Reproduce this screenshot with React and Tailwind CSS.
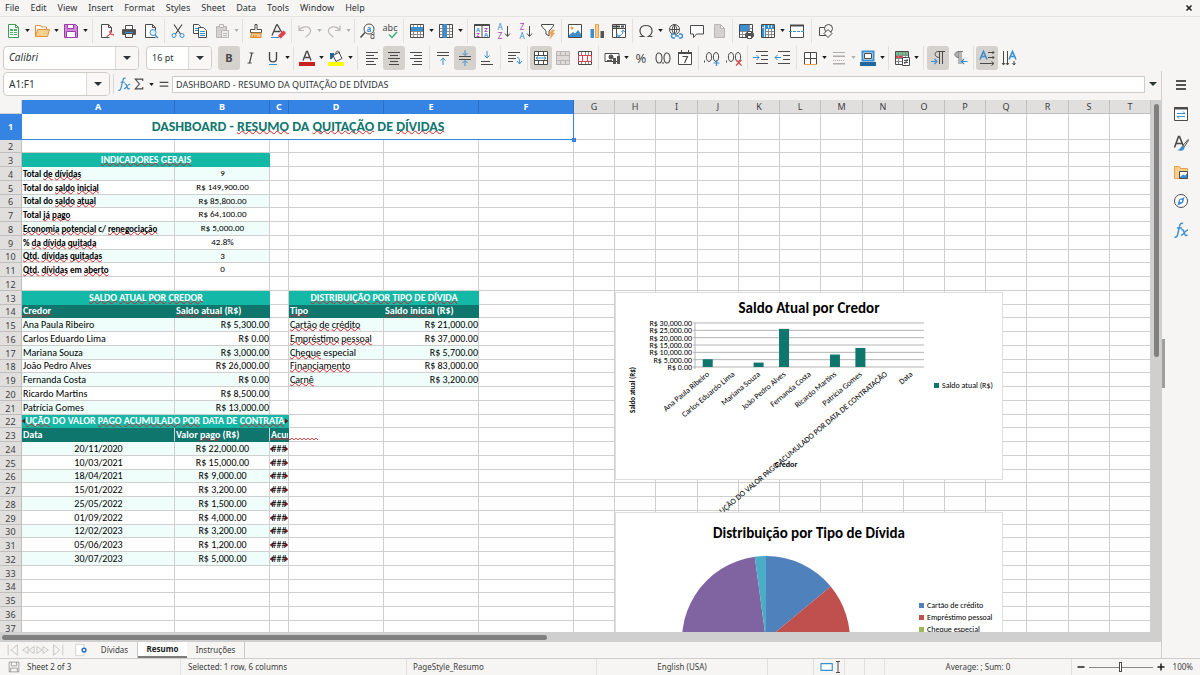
import { Fragment } from 'react'

const DARK = '#4a4a4a'
const BLUE = '#3a8fd0'
const ORANGE = '#e8a04c'
const PURPLE = '#a845b5'

const COLUMNS = [
  ['A', 'w-[153px]'], ['B', 'w-[95px]'], ['C', 'w-[19px]'], ['D', 'w-[95px]'], ['E', 'w-[95px]'],
  ['F', 'w-[95px]'], ['G', 'w-[41px]'], ['H', 'w-[41px]'], ['I', 'w-[42px]'], ['J', 'w-[41px]'],
  ['K', 'w-[41px]'], ['L', 'w-[41px]'], ['M', 'w-[42px]'], ['N', 'w-[41px]'], ['O', 'w-[41px]'],
  ['P', 'w-[41px]'], ['Q', 'w-[41px]'], ['R', 'w-[42px]'], ['S', 'w-[41px]'], ['T', ''],
]

const KINDS = {
  title: 'text-center align-middle text-[14px] font-bold text-[#0f766e] border-[#3584e4]',
  section: 'text-center text-[10px] font-bold text-white bg-[#14b8a6] border-[#14b8a6]',
  head: 'text-[10px] font-bold text-white bg-[#0f766e] border-[#0f766e] align-bottom',
  headLined: 'text-[10px] font-bold text-white bg-[#0f766e] border-b-[#0f766e] border-r-[#cfcfcf] align-bottom',
  label: 'text-[9px] font-bold align-bottom border-[#cfcfcf]',
  value: 'text-[9px] text-center align-top border-[#cfcfcf]',
  text: 'text-[10px] align-bottom border-[#cfcfcf]',
  money: 'text-[10px] text-right align-bottom border-[#cfcfcf]',
  center: 'text-[10px] text-center border-[#cfcfcf]',
}

// words between ~ are marked by the spell checker
const CELLS = {
  A1: ['title', 'DASHBOARD - ~RESUMO~ DA ~QUITAÇÃO~ DE ~DÍVIDAS~', 6],
  A3: ['section', '~INDICADORES~ ~GERAIS~', 2],
  A13: ['section', '~SALDO~ ~ATUAL~ ~POR~ ~CREDOR~', 2],
  D13: ['section', '~DISTRIBUIÇÃO~ ~POR~ ~TIPO~ DE ~DÍVIDA~', 2],
  A14: ['head', '~Credor~'],
  B14: ['head', '~Saldo~ ~atual~ (R$)'],
  D14: ['head', '~Tipo~'],
  E14: ['head', '~Saldo~ ~inicial~ (R$)'],
  A23: ['headLined', 'Data'],
  B23: ['headLined', 'Valor ~pago~ (R$)'],
}

const INDICATORS = [
  ['Total ~de~ ~dívidas~', '9'],
  ['Total do ~saldo~ ~inicial~', 'R$ 149,900.00'],
  ['Total do ~saldo~ ~atual~', 'R$ 85,800.00'],
  ['Total ~já~ ~pago~', 'R$ 64,100.00'],
  ['~Economia~ ~potencial~ c/ ~renegociação~', 'R$ 5,000.00'],
  ['% ~da~ ~dívida~ ~quitada~', '42.8%'],
  ['~Qtd.~ ~dívidas~ ~quitadas~', '3'],
  ['~Qtd.~ ~dívidas~ em ~aberto~', '0'],
]
const CREDITORS = [
  ['Ana Paula Ribeiro', 5300], ['Carlos Eduardo Lima', 0], ['Mariana Souza', 3000],
  ['João Pedro Alves', 26000], ['Fernanda Costa', 0], ['Ricardo Martins', 8500], ['Patrícia Gomes', 13000],
]
const TYPES = [
  ['~Cartão~ ~de~ ~crédito~', 21000], ['~Empréstimo~ ~pessoal~', 37000], ['~Cheque~ especial', 5700],
  ['~Financiamento~', 83000], ['~Carnê~', 3200],
]
const PAYMENTS = [
  ['20/11/2020', 22000], ['10/03/2021', 15000], ['18/04/2021', 9000], ['15/01/2022', 3200],
  ['25/05/2022', 1500], ['01/09/2022', 4000], ['12/02/2023', 3200], ['05/06/2023', 1200], ['30/07/2023', 5000],
]

const money = (n) => 'R$ ' + n.toLocaleString('en-US', { minimumFractionDigits: 2 })

INDICATORS.forEach(([label, value], i) => {
  CELLS['A' + (4 + i)] = ['label', label, 1, i % 2 === 0]
  CELLS['B' + (4 + i)] = ['value', value, 1, i % 2 === 0]
})
CREDITORS.forEach(([name, value], i) => {
  CELLS['A' + (15 + i)] = ['text', name, 1, i % 2 === 0]
  CELLS['B' + (15 + i)] = ['money', money(value), 1, i % 2 === 0]
})
TYPES.forEach(([name, value], i) => {
  CELLS['D' + (15 + i)] = ['text', name, 1, i % 2 === 0]
  CELLS['E' + (15 + i)] = ['money', money(value), 1, i % 2 === 0]
})
PAYMENTS.forEach(([date, value], i) => {
  CELLS['A' + (24 + i)] = ['center', date, 1, i % 2 === 0]
  CELLS['B' + (24 + i)] = ['center', money(value), 1, i % 2 === 0]
})

function Spelled({ text }) {
  return text.split('~').map((part, i) =>
    i % 2 ? (
      <span key={i} className="underline decoration-[#e01b24] decoration-wavy decoration-1 -underline-offset-1 [text-decoration-skip-ink:none]">{part}</span>
    ) : (
      <Fragment key={i}>{part}</Fragment>
    )
  )
}

/* ---------- toolbar pieces ---------- */

function Svg({ children, size = 'size-4', box = '0 0 16 16' }) {
  return (
    <svg viewBox={box} className={`${size} shrink-0 overflow-visible`} fill="none" stroke={DARK} strokeWidth="1" aria-hidden="true">
      {children}
    </svg>
  )
}

function Tool({ label, active, disabled, children }) {
  return (
    <button
      type="button"
      aria-label={label}
      disabled={disabled}
      className={`flex h-6 w-[22px] shrink-0 items-center justify-center rounded-[3px] ${active ? 'bg-[#d5d1cd]' : ''}`}
    >
      {children}
    </button>
  )
}

function Caret({ label = 'More options', faded, className = 'w-[7px]' }) {
  return (
    <button type="button" aria-label={label} className={`flex h-6 shrink-0 items-center justify-center ${className}`}>
      <svg viewBox="0 0 6 4" className="h-[3px] w-[5px]" fill={faded ? '#b5b2af' : '#1c1c1c'} aria-hidden="true"><path d="M0 0h6L3 4z" /></svg>
    </button>
  )
}

function Sep({ wide }) {
  return (
    <span className={`flex h-6 shrink-0 justify-center ${wide ? 'w-[7px]' : 'w-[5px]'}`}>
      <span className="w-px bg-[#e2e0de]" />
    </span>
  )
}

const Glyph = ({ x = 8, y, size, fill = DARK, bold, children }) => (
  <text x={x} y={y} fontSize={size} fill={fill} stroke="none" textAnchor="middle" fontWeight={bold ? 700 : 400} fontFamily="Noto Sans, sans-serif">{children}</text>
)

const GridLines = () => (
  <>
    <path stroke="#8c8c8c" d="M1.5 5.500h13M1.500 8.500h13M1.500 11.500h13M4.500 1.500v13M8.500 1.500v13M11.500 1.500v13" />
    <path d="M1.500 1.500h13v13h-13z" />
  </>
)

const RowIcon = () => (
  <Svg><path fill="#fff" stroke="none" d="M1 1h14v14H1z" /><GridLines /><rect x="2" y="4" width="12" height="4" fill={BLUE} stroke="none" /></Svg>
)
const ColIcon = () => (
  <Svg><path fill="#fff" stroke="none" d="M1 1h14v14H1z" /><GridLines /><rect x="5" y="1" width="4" height="14" fill={BLUE} stroke="none" /></Svg>
)
const NewIcon = () => (
  <Svg>
    <path stroke="#3d9c55" fill="#fff" d="M3.500 1.500h7l3 3v10h-10z" />
    <path stroke="#3d9c55" d="M10.500 1.500v3h3" />
    <path fill="#4fae66" stroke="none" d="M5 6h7v6H5z" />
    <path stroke="#fff" d="M5 8.500h7M5 10.500h7M8.500 6v6" />
  </Svg>
)
const OpenIcon = () => (
  <Svg>
    <path stroke="#e0923a" fill="#fff" d="M1.500 13.500v-11h5l1 1.500h5v2.500" />
    <path stroke="#e0923a" fill="#f8cf8d" d="M1.500 13.500l2-7h12l-2 7z" />
  </Svg>
)
const SaveIcon = () => (
  <Svg>
    <path stroke="#9a3da8" fill="#cf88d8" d="M1.500 1.500h11l2 2v11h-13z" />
    <path stroke="#9a3da8" fill="#fff" d="M4.500 1.500h6v4h-6zM3.500 8.500h9v6h-9z" />
  </Svg>
)
const PdfIcon = () => (
  <Svg>
    <path fill="#fff" d="M10.500 14.500h-8v-13h7l3 3v5M9.500 1.500v3h3" />
    <path stroke="#d8434e" d="M7.500 13.500c3-1 5-4 4-6.500M10 8c1 3 3 4 5 4M8 13.500c2-2 5-3 7-1.500" />
  </Svg>
)
const PrintIcon = () => (
  <Svg>
    <path fill="#fff" d="M4.500 6V2.500h7V6" />
    <rect x="1" y="6" width="14" height="6" rx="1" fill="#555" stroke="none" />
    <path fill={BLUE} stroke="none" d="M4 9h8v1H4z" />
    <path fill="#fff" d="M4.500 10.500h7v4h-7z" />
  </Svg>
)
const PreviewIcon = () => (
  <Svg>
    <path fill="#fff" d="M12.500 14.500h-10v-13h7l3 3v3M9.500 1.500v3h3" />
    <circle cx="10" cy="9.500" r="3" stroke={BLUE} fill="#e6f2fb" /><path stroke={BLUE} strokeWidth="1.500" d="M12 12l3 3" />
  </Svg>
)
const CutIcon = () => (
  <Svg>
    <path d="M4 1.500l6.500 9.500M12 1.500L5.500 11" strokeWidth="1.200" />
    <circle cx="4" cy="12.500" r="2" stroke={BLUE} /><circle cx="12" cy="12.500" r="2" stroke={BLUE} />
  </Svg>
)
const CopyIcon = () => (
  <Svg>
    <path fill="#fff" d="M1.500 1.500h5l2 2v7h-7z" />
    <path stroke={BLUE} d="M3 5.500h3M3 7.500h3" />
    <path fill="#fff" d="M6.500 4.500h5l3 3v7h-8z" />
    <path stroke={BLUE} d="M8 8.500h5M8 10.500h5M8 12.500h5" />
  </Svg>
)
const PasteIcon = () => (
  <Svg>
    <path stroke="#b9b6b3" fill="#d4d1ce" d="M2.500 3.500h10v11h-10z" />
    <path stroke="#b9b6b3" fill="#eee" d="M5.500 1.500h4v3h-4zM7.500 7.500h7v7h-7zM9 10.500h4M9 12.500h4" />
  </Svg>
)
const BrushIcon = () => (
  <Svg>
    <path fill="#fff" d="M7 1.500h2v5h4.500v3h-11v-3H7z" />
    <path stroke="#d98a36" fill="#f5c480" d="M3.500 10h9.500v4.500H2.500z" />
    <path stroke="#d98a36" d="M5.500 12v2.500M8 12v2.500" />
  </Svg>
)
const ClearIcon = () => (
  <Svg>
    <path d="M2 12.500L6.500 2h1L12 10M4 8.500h6" strokeWidth="1.300" />
    <path stroke={BLUE} d="M1 14.500h8" />
    <rect x="8" y="9.500" width="8" height="4" rx="1" fill="#e0444e" stroke="none" transform="rotate(-45 12 11.500)" />
  </Svg>
)
const UndoIcon = ({ flip }) => (
  <Svg>
    <g transform={flip ? 'translate(16 0) scale(-1 1)' : undefined} stroke="#bab7b4" strokeWidth="1.200">
      <path d="M2 2.500v5h5M2 7.500C5 3 12 2.500 13.500 7c.8 3-2 5-5 7" />
    </g>
  </Svg>
)
const FindIcon = () => (
  <Svg>
    <circle cx="9" cy="6" r="5" fill="#fff" /><path d="M5 9.500L.5 14.500" strokeWidth="1.500" />
    <Glyph x={9} y={9} size={8} fill={BLUE} bold>a</Glyph><Glyph x={12.500} y={16} size={8}>d</Glyph>
  </Svg>
)
const SpellIcon = () => (
  <Svg><Glyph y={8} size={9}>abc</Glyph><path stroke="#3fae7d" strokeWidth="1.500" d="M7 11.500l3 3 5-5.500" /></Svg>
)
const SortIcon = () => (
  <Svg>
    <path d="M.5 1.500h15v13H.5zM8 1.500v13" fill="#fff" /><path d="M.5 2h15" strokeWidth="2" />
    <Glyph x={4} y={8.500} size={6} fill={BLUE} bold>A</Glyph><Glyph x={4} y={14} size={6} fill={PURPLE} bold>Z</Glyph>
    <Glyph x={12} y={8.500} size={6} fill={PURPLE} bold>Z</Glyph><Glyph x={12} y={14} size={6} fill={BLUE} bold>A</Glyph>
  </Svg>
)
const AzIcon = ({ top, bottom, topColor, bottomColor }) => (
  <Svg>
    <Glyph x={4} y={7} size={8} fill={topColor}>{top}</Glyph><Glyph x={4} y={15.500} size={8} fill={bottomColor}>{bottom}</Glyph>
    <path d="M11.500 3v10M9 10.500l2.500 3 2.500-3" />
  </Svg>
)
const FilterIcon = () => (
  <Svg>
    <path fill="#fff" d="M1.500 1.500h12v1.500L9 8v5l-3-2V8L1.500 3z" />
    <path fill="#f0a848" stroke="#d98a36" strokeWidth=".5" d="M12 7l-3 4h2.500L10 15.500l4.500-5.500H12L14.500 7z" />
  </Svg>
)
const ImageIcon = () => (
  <Svg>
    <path fill="#fff" d="M1.500 1.500h13v13h-13z" /><circle cx="5" cy="5" r="1.500" fill={ORANGE} stroke="none" />
    <path fill={BLUE} stroke="none" d="M2 12l4-3 2 1.500L11 7l3 4v3H2z" />
  </Svg>
)
const ChartIcon = () => (
  <Svg>
    <path fill={BLUE} stroke="none" d="M1.500 6h3.500v9H1.500z" /><path fill="#f8cf8d" stroke={ORANGE} d="M6.500 1.500h3v13h-3z" />
    <path fill="#555" stroke="none" d="M11.500 8h3.500v7h-3.500z" />
  </Svg>
)
const PivotIcon = () => (
  <Svg>
    <path fill="#fff" d="M1.500 1.500h13v13h-13zM5.500 1.500v13M1.500 5.500h13" /><path d="M2 3.500h12" strokeWidth="2" strokeDasharray="3 1" />
    <path stroke={BLUE} d="M6 10v3h3M7 13c3 0 5-2 5-5M10.500 9L12 7l2 2" />
  </Svg>
)
const OmegaIcon = () => (
  <Svg><path d="M1.500 13.500h4c-5-3-5-11 2.500-11s7.500 8 2.500 11h4" strokeWidth="1.200" /></Svg>
)
const LinkIcon = () => (
  <Svg>
    <circle cx="7.500" cy="6.500" r="5" fill="#fff" /><path d="M2.500 6.500h10M7.500 1.500v10M7.500 1.500c-3 3-3 7 0 10M7.500 1.500c3 3 3 7 0 10" />
    <path stroke={BLUE} strokeWidth="1.300" fill="#f6f5f4" d="M8 11h-1.500a2 2 0 000 4H8M12 11h1.500a2 2 0 010 4H12M8 13h4" />
  </Svg>
)
const CommentIcon = () => (
  <Svg><path fill="#fff" d="M1.500 2.500h13v8.500H7.500l-3 3.500V11h-3z" /></Svg>
)
const PageIcon = () => (
  <Svg><path stroke="#b9b6b3" fill="#d4d1ce" d="M3.500 1.500h6l4 4v9h-10zM9.500 1.500v4h4" /></Svg>
)
const PrintAreaIcon = () => (
  <Svg>
    <path fill="#fff" stroke="none" d="M1 1h14v14H1z" /><GridLines /><rect x="2" y="2" width="9" height="6" fill={BLUE} stroke="none" />
    <rect x="7" y="10" width="9" height="4" rx="1" fill="#555" stroke="none" /><path fill="#fff" d="M9.500 8.500h4v2h-4zM9.500 12.500h4v3h-4z" />
  </Svg>
)
const FreezeIcon = () => (
  <Svg><path fill="#fff" stroke="none" d="M1 1h14v14H1z" /><GridLines /><path fill={BLUE} stroke="none" d="M2 2h12v4H6v8H2z" /><path stroke="#cfe6f7" d="M4.500 2v12M8.500 2v3M11.500 2v3M2 4.500h3" /></Svg>
)
const SplitIcon = () => (
  <Svg><path fill="#fff" d="M1.500 2.500h13v12h-13z" /><path strokeWidth="2" d="M1 2.500h14" /><path stroke={BLUE} strokeDasharray="3 1" d="M0 8.500h16" /></Svg>
)
const ShapesIcon = () => (
  <Svg><path d="M1.500 4.500h7v8h-7z" /><circle cx="10.500" cy="5.500" r="4" fill="#f6f5f4" /><path fill="#f6f5f4" d="M10 6.500l4 4-4 4-4-4z" /></Svg>
)

const Lines = ({ d, color, children }) => <Svg><path d={d} stroke={color} />{children}</Svg>

const MergeIcon = ({ color = DARK, fill = '#fff', mid = BLUE }) => (
  <Svg>
    <path fill={fill} stroke={color} d="M1.500 1.500h13v13h-13zM1.500 5.500h13M1.500 10.500h13M5.500 1.500v4M10.500 1.500v4M5.500 10.500v4M10.500 10.500v4" />
    <path stroke={mid} d="M3 8h10M5 6.500L3 8l2 1.500M11 6.500L13 8l-2 1.500" />
  </Svg>
)

const StandardBar = () => (
  <div role="toolbar" aria-label="Standard" className="flex h-[27px] items-center pl-0.5">
    <Tool label="New"><NewIcon /></Tool><Caret />
    <Tool label="Open"><OpenIcon /></Tool><Caret />
    <Tool label="Save"><SaveIcon /></Tool><Caret />
    <Sep wide />
    <Tool label="Export as PDF"><PdfIcon /></Tool>
    <Tool label="Print"><PrintIcon /></Tool>
    <Tool label="Print preview"><PreviewIcon /></Tool>
    <Sep />
    <Tool label="Cut"><CutIcon /></Tool>
    <Tool label="Copy"><CopyIcon /></Tool>
    <Tool label="Paste" disabled><PasteIcon /></Tool><Caret faded />
    <Sep />
    <Tool label="Clone formatting"><BrushIcon /></Tool>
    <Tool label="Clear formatting"><ClearIcon /></Tool>
    <Sep />
    <Tool label="Undo" disabled><UndoIcon /></Tool><Caret faded />
    <Tool label="Redo" disabled><UndoIcon flip /></Tool><Caret faded />
    <Sep />
    <Tool label="Find and replace"><FindIcon /></Tool>
    <Tool label="Spelling"><SpellIcon /></Tool>
    <Sep />
    <Tool label="Row"><RowIcon /></Tool><Caret />
    <Tool label="Column"><ColIcon /></Tool><Caret />
    <Sep wide />
    <Tool label="Sort"><SortIcon /></Tool>
    <Tool label="Sort ascending"><AzIcon top="A" bottom="Z" topColor={BLUE} bottomColor={PURPLE} /></Tool>
    <Tool label="Sort descending"><AzIcon top="Z" bottom="A" topColor={PURPLE} bottomColor={BLUE} /></Tool>
    <Tool label="AutoFilter"><FilterIcon /></Tool>
    <Sep />
    <Tool label="Image"><ImageIcon /></Tool>
    <Tool label="Chart"><ChartIcon /></Tool>
    <Tool label="Pivot table"><PivotIcon /></Tool>
    <Sep />
    <Tool label="Special character"><OmegaIcon /></Tool><Caret />
    <Tool label="Hyperlink"><LinkIcon /></Tool>
    <Tool label="Comment"><CommentIcon /></Tool>
    <Tool label="Headers and footers" disabled><PageIcon /></Tool>
    <Sep />
    <Tool label="Print area"><PrintAreaIcon /></Tool>
    <Tool label="Freeze"><FreezeIcon /></Tool><Caret />
    <Tool label="Split window"><SplitIcon /></Tool>
    <Sep wide />
    <Tool label="Draw functions"><ShapesIcon /></Tool>
  </div>
)

function ComboBox({ label, value, className, inputClass = '' }) {
  return (
    <div className={`flex h-6 shrink-0 overflow-hidden rounded border border-[#cfcbc7] bg-white ${className}`}>
      <input aria-label={label} defaultValue={value} className={`min-w-0 flex-1 pl-[5px] text-[#2e3436] outline-none ${inputClass}`} />
      <button type="button" aria-label={`${label} list`} className="flex w-[23px] items-center justify-center border-l border-[#dad7d4] bg-[#f8f7f6]">
        <svg viewBox="0 0 8 4" className="h-1 w-2" fill="#2e3436" aria-hidden="true"><path d="M0 0h8L4 4z" /></svg>
      </button>
    </div>
  )
}

const FormattingBar = () => (
  <div role="toolbar" aria-label="Formatting" className="flex h-[27px] items-center pl-[3px]">
    <ComboBox label="Font name" value="Calibri" className="mr-[7px] w-[136px]" inputClass="text-[10px] italic" />
    <ComboBox label="Font size" value="16 pt" className="mr-1.5 w-[66px]" inputClass="text-[9px]" />
    <Tool label="Bold" active><Svg><Glyph y={12} size={11} bold>B</Glyph></Svg></Tool>
    <Tool label="Italic"><Svg><path d="M6.500 3h4M4.500 13h4M9 3L6.500 13" strokeWidth="1.200" /></Svg></Tool>
    <Tool label="Underline"><Svg><path d="M4.500 2v6.500c0 4.500 7 4.500 7 0V2" strokeWidth="1.400" /><path stroke={BLUE} d="M4 14.500h8" /></Svg></Tool><Caret />
    <Sep />
    <Tool label="Font color"><Svg><path d="M4 10.500L7.500 1.500h1L12 10.500M5.500 7.500h5" strokeWidth="1.400" /><path fill="#c9211e" stroke="none" d="M0 12h16v4H0z" /></Svg></Tool><Caret />
    <Tool label="Highlighting color"><Svg><path fill="#fff" d="M5 5.500l6-3 3 6-6 3z" /><path d="M8 4c-1-3 3-4 4-1" /><path fill="#22669e" stroke="none" d="M2 3h4v2L4 9H2z" /><path fill="#ffff00" stroke="none" d="M0 12h16v4H0z" /></Svg></Tool><Caret />
    <Sep wide />
    <Tool label="Align left"><Lines d="M2 2.500h12M2 5.500h8M2 8.500h12M2 11.500h8M2 14.500h10" /></Tool>
    <Tool label="Center horizontally" active><Lines d="M2 2.500h12M4 5.500h8M2 8.500h12M4 11.500h8M3 14.500h10" /></Tool>
    <Tool label="Align right"><Lines d="M2 2.500h12M6 5.500h8M2 8.500h12M6 11.500h8M4 14.500h10" /></Tool>
    <Sep />
    <Tool label="Align top"><Lines d="M2 2.500h12M2 5.500h12"><path stroke={BLUE} d="M8 15V8M5.500 10.500L8 8l2.500 2.500" /></Lines></Tool>
    <Tool label="Center vertically" active><Lines d="M2 6.500h12M2 9.500h12"><path stroke={BLUE} d="M8 0v5M5.500 3L8 5.500 10.500 3M8 16v-5M5.500 13L8 10.500l2.500 2.500" /></Lines></Tool>
    <Tool label="Align bottom"><Lines d="M2 11.500h9M2 14.500h12"><path stroke={BLUE} d="M8 1v7M5.500 5.500L8 8l2.500-2.500" /></Lines></Tool>
    <Sep />
    <Tool label="Wrap text"><Lines d="M2 2.500h12M2 5.500h8M2 8.500h8M2 11.500h5"><path stroke={BLUE} d="M11 7.500c2 0 3 2 2.500 6M11 11l2.500 3L16 11" /></Lines></Tool>
    <Sep />
    <Tool label="Merge and center cells" active><MergeIcon /></Tool>
    <Tool label="Merge cells" disabled><MergeIcon color="#b9b6b3" fill="#dddad8" mid="#dddad8" /></Tool>
    <Tool label="Unmerge cells"><Svg><path fill="#fff" stroke="none" d="M1 1h14v14H1z" /><GridLines /><path fill="#fff" stroke="#d8434e" d="M1.500 5.500h13v6h-13zM5.500 5.500v6M10.500 5.500v6" /></Svg></Tool>
    <Sep />
    <Tool label="Currency"><Svg><path d="M1 3.500h14v8H1z" fill="#fff" /><circle cx="7" cy="7" r="2" fill="#555" /><path fill="#555" stroke="none" d="M9 8h3v6H9zM13 6h3v8h-3zM3 10h5v2H3z" /></Svg></Tool><Caret />
    <Tool label="Percent"><Svg><Glyph y={13} size={13}>%</Glyph></Svg></Tool>
    <Tool label="Number"><Svg><path strokeWidth="1.100" d="M4 3c-4 0-4 10 0 10s4-10 0-10zM12 3c-4 0-4 10 0 10s4-10 0-10zM8 12v2" /></Svg></Tool>
    <Tool label="Date"><Svg><path fill="#fff" d="M1.500 2.500h13v12h-13z" /><path d="M1 3h14" strokeWidth="2" /><path d="M4.500 0v2M11.500 0v2" /><path d="M5.500 6.500h5L7.500 13" strokeWidth="1.200" /></Svg></Tool>
    <Sep />
    <Tool label="Add decimal place"><Svg><path d="M5 2.500c-3.500 0-3.500 9 0 9s3.500-9 0-9zM12 2.500c-3.500 0-3.500 9 0 9s3.500-9 0-9zM.5 10.500v2" /><path stroke={BLUE} strokeWidth="1.200" d="M12.500 10v6M9.500 13h6" /></Svg></Tool>
    <Tool label="Delete decimal place"><Svg><path d="M5 2.500c-3.500 0-3.500 9 0 9s3.500-9 0-9zM12 2.500c-3.500 0-3.500 9 0 9s3.500-9 0-9zM.5 10.500v2" /><path stroke="#e0444e" strokeWidth="1.200" d="M10 10l5.500 5.500M15.500 10L10 15.500" /></Svg></Tool>
    <Sep />
    <Tool label="Increase indent"><Lines d="M3 1.500h12M8 5.500h7M8 9.500h7M3 13.500h12"><path stroke={BLUE} d="M0 7.500h6M3.500 5L6 7.500 3.500 10" /></Lines></Tool>
    <Tool label="Decrease indent"><Lines d="M3 1.500h12M8 5.500h7M8 9.500h7M3 13.500h12"><path stroke={BLUE} d="M0 7.500h6M2.500 5L0 7.500 2.500 10" /></Lines></Tool>
    <Sep />
    <Tool label="Borders"><Svg><path fill="#fff" d="M2.500 14V2.500h12V14M8.500 2.500v12M2.500 8.500h12" /><path stroke={ORANGE} d="M2 14.500h13" /></Svg></Tool><Caret />
    <Tool label="Border style" disabled><Lines color="#b0adaa" d="M2 2.500h12M2 6.500h12M2 6h12M2 14h12M2 13.500h12"><path stroke="#b0adaa" strokeDasharray="1 1" d="M2 10.500h12" /></Lines></Tool><Caret faded />
    <Tool label="Border color"><Svg><path fill="#fff" stroke={BLUE} strokeWidth="2" d="M2.500 1.500h11v9h-11z" /><path d="M4.500 3.500h7v5h-7z" /><path fill="#22669e" stroke="none" d="M0 12h16v4H0z" /></Svg></Tool><Caret />
    <Sep />
    <Tool label="Conditional"><Svg><path fill="#fff" stroke="none" d="M1 1h14v14H1z" /><rect x="2" y="1" width="12" height="4" fill="#6cc08a" stroke="none" /><rect x="2" y="5" width="6" height="4" fill="#e0444e" stroke="none" /><GridLines /><path fill="#fff" d="M8.500 7.500h7v8h-7z" /><path d="M10 10.500h4M10 12.500h4M13.500 9l-3 5" /></Svg></Tool><Caret />
    <Sep wide />
    <Tool label="Left to right" active><Svg><path d="M9.500 14V2M12.500 14V2M15 1.500H8c-4 0-4 6 1.500 6" /><path stroke={BLUE} strokeWidth="1.200" d="M1 11.500h6M4.500 9L7 11.500 4.500 14" /></Svg></Tool>
    <Tool label="Right to left"><Svg><path fill="#b5b2af" stroke="#777" d="M7 7.500V14M7 2v5.500c-5.500 0-5.500-6 0-6zM9 1.500V14M6 1.500h5" /><path stroke={BLUE} strokeWidth="1.200" d="M9.500 11.500h6M12 9l-2.500 2.500L12 14" /></Svg></Tool>
    <Sep />
    <Tool label="Text direction from left to right" active><Svg><path stroke={BLUE} strokeWidth="1.600" d="M1 9.500L4.500 1.500 8 9.500M2.500 6.500h4" /><path d="M9 2.500h6M9 7.500h6M1 13.500h14M13.500 1l1.500 1.500L13.500 4M13.500 6L15 7.500 13.500 9M12.500 11.500l2.500 2-2.500 2" /></Svg></Tool>
    <Tool label="Text direction from top to bottom"><Svg><path stroke={BLUE} strokeWidth="1.600" d="M8 9.500l3.500-8 3.500 8M9.500 6.500h4" /><path d="M2.500 1v14M6.500 1v14M13 11v4M1 13l1.500 2L4 13M5 13l1.500 2L8 13M11.500 13l1.500 2 1.500-2" /></Svg></Tool>
  </div>
)

const FxIcon = ({ size = 'size-4' }) => (
  <Svg size={size}>
    <path stroke={BLUE} strokeWidth="1.400" d="M10 1.500c-2-1-3 .5-3.500 3L4.500 13c-.5 2-1.500 2.500-3 2M4 6h5M8.500 8c2-1 2 1 3 3.500s1 2.500 3 1.500M15 8c-3 0-4 5-7 5.500" />
  </Svg>
)

const FormulaBar = () => (
  <div className="flex h-[29px] items-center pb-[3px] pl-[3px]">
    <ComboBox label="Name box" value="A1:F1" className="w-[107px]" inputClass="text-[10px]" />
    <span className="ml-[3px] h-5 w-px bg-[#dad7d4]" />
    <button type="button" aria-label="Function wizard" className="ml-[3px] flex w-3.5 justify-center"><FxIcon size="size-3.5" /></button>
    <button type="button" aria-label="Select function" className="ml-0.5 flex w-3 justify-center">
      <Svg size="size-3"><path strokeWidth="1.500" d="M13 4V1.500H3L8.500 8 3 14.500h10V12" /></Svg>
    </button>
    <Caret className="ml-px w-2.5" />
    <button type="button" aria-label="Formula" className="ml-0.5 flex w-3 justify-center">
      <Svg size="size-2.5"><path strokeWidth="2" d="M1 5.500h14M1 11.500h14" /></Svg>
    </button>
    <input
      aria-label="Input line"
      defaultValue="DASHBOARD - RESUMO DA QUITAÇÃO DE DÍVIDAS"
      className="ml-0.5 h-[17px] min-w-0 flex-1 border border-[#cfcbc7] bg-white pl-[3px] text-[9px] text-[#2e3436] outline-none"
    />
    <button type="button" aria-label="Expand formula bar" className="flex w-4 justify-center">
      <svg viewBox="0 0 8 4" className="h-1 w-2" fill="#2e3436" aria-hidden="true"><path d="M0 0h8L4 4z" /></svg>
    </button>
  </div>
)

/* ---------- sheet ---------- */

const Cut = ({ side }) => (
  <svg viewBox="0 0 4 6" className={`absolute top-[3px] h-1.5 w-[3px] ${side === 'left' ? 'left-0' : 'right-0'}`} aria-hidden="true">
    <path fill="#8c1018" stroke="#200" strokeWidth=".5" d={side === 'left' ? 'M4 0v6L0 3z' : 'M0 0v6l4-3z'} />
  </svg>
)

function Cell({ id, col, row }) {
  const base = 'h-full border-r border-b p-0 leading-[12px] whitespace-nowrap'
  if (id === 'A22') {
    return (
      <td colSpan={3} className={`${base} border-[#14b8a6] bg-[#14b8a6] text-[10px] font-bold text-white`}>
        <div className="relative flex justify-center overflow-hidden">
          <span>
            <Spelled text="~UÇÃO~ DO VALOR ~PAGO~ ~ACUMULADO~ ~POR~ DATA DE ~CONTRATA~" />
          </span>
          <Cut side="left" /><Cut side="right" />
        </div>
      </td>
    )
  }
  if (id === 'C23') {
    return (
      <td className={`${base} relative border-[#0f766e] bg-[#0f766e] align-bottom text-[10px] font-bold text-white`}>
        <div className="overflow-hidden pl-px">Acum</div>
        <svg viewBox="0 0 48 4" className="absolute bottom-0 left-0 h-1 w-12" fill="none" stroke="#e01b24" aria-hidden="true">
          <path strokeWidth=".8" d={'M0 3' + 'l2 -2l2 2'.repeat(12)} />
        </svg>
      </td>
    )
  }
  if (col === 'C' && row >= 24 && row <= 32) {
    return (
      <td className={`${base} border-[#cfcfcf] align-middle text-[10px] ${row % 2 ? '' : 'bg-[#effefb]'}`}>
        <div className="relative text-center"><Cut side="left" />###<Cut side="right" /></div>
      </td>
    )
  }
  const cell = CELLS[id]
  if (!cell) return <td className={`${base} border-[#cfcfcf]`} />
  const [kind, text, span, tinted] = cell
  return (
    <td colSpan={span} className={`${base} pl-px ${tinted ? 'bg-[#effefb]' : ''} ${KINDS[kind]} ${row === 1 ? 'relative' : ''}`}>
      <Spelled text={text} />
      {id === 'A1' && <span className="absolute -right-[3px] -bottom-[3px] size-1 bg-[#3584e4]" />}
    </td>
  )
}

function rowCells(row) {
  const out = []
  for (let i = 0; i < COLUMNS.length; i++) {
    const col = COLUMNS[i][0]
    const id = col + row
    out.push(<Cell key={id} id={id} col={col} row={row} />)
    if (id === 'A22') i += 2
    else i += (CELLS[id]?.[2] ?? 1) - 1
  }
  return out
}

const SheetGrid = () => (
  <table className="w-full table-fixed border-separate border-spacing-0 bg-white font-[Carlito,Lato,sans-serif] text-black">
    <colgroup>
      <col className="w-[22px]" />
      {COLUMNS.map(([name, width]) => <col key={name} className={width} />)}
    </colgroup>
    <thead>
      <tr className="h-3.5 font-['Noto_Sans',sans-serif] text-[9px] leading-[12px]">
        <td className="border-r border-b border-[#cfcfcf] bg-[#f6f5f4] p-0" />
        {COLUMNS.map(([name], i) => (
          <th
            key={name}
            scope="col"
            className={`border-r border-b p-0 ${i < 6 ? 'border-r-[#2a6fc4] border-b-[#3584e4] bg-[#3584e4] font-bold text-white' : 'border-[#c0bfbd] bg-[#e1dfdd] font-normal text-[#3d3d3d]'}`}
          >
            {name}
          </th>
        ))}
      </tr>
    </thead>
    <tbody>
      {Array.from({ length: 37 }, (_, i) => i + 1).map((row) => (
        <tr key={row} className={row === 1 ? 'h-[26px]' : row % 4 === 2 ? 'h-[13px]' : 'h-3.5'}>
          <th
            scope="row"
            className={`border-r border-b p-0 font-['Noto_Sans',sans-serif] text-[9px] ${row === 1 ? 'border-[#3584e4] bg-[#3584e4] font-bold text-white' : 'border-[#c0bfbd] bg-[#e1dfdd] pt-px align-bottom leading-[11px] font-normal text-[#3d3d3d]'}`}
          >
            {row}
          </th>
          {rowCells(row)}
        </tr>
      ))}
    </tbody>
  </table>
)

/* ---------- charts ---------- */

const CATEGORIES = [...CREDITORS, ['UÇÃO DO VALOR PAGO ACUMULADO POR DATA DE CONTRATAÇÃO', 0], ['Data', 0]]

function BarChart() {
  const left = 80, right = 309, top = 31, bottom = 75
  const step = (right - left) / CATEGORIES.length
  return (
    <svg viewBox="1 1 386 186" role="img" aria-label="Saldo Atual por Credor" className="h-[186px] w-[386px] overflow-visible">
      <text x="194" y="21" textAnchor="middle" className="text-[15px] font-bold">Saldo Atual por Credor</text>
      {[30, 25, 20, 15, 10, 5, 0].map((v, i) => {
        const y = top + ((bottom - top) * i) / 6
        return (
          <g key={v}>
            <path d={`M${left - 2} ${y}H${right}`} stroke="#b3b3b3" />
            <text x="77" y={y + 3} textAnchor="end" className="text-[8px]">{money(v * 1000)}</text>
          </g>
        )
      })}
      <path d={`M${left} ${top}V${bottom + 2}`} stroke="#b3b3b3" />
      {CATEGORIES.map(([name, value], i) => {
        const x = left + step * (i + 0.5)
        const h = ((bottom - top) * value) / 30000
        return (
          <g key={name}>
            {value > 0 && <rect x={x - 5} y={bottom - h} width="10" height={h} fill="#0f766e" />}
            <text x={x + 2} y={bottom + 8} textAnchor="end" transform={`rotate(-40 ${x + 2} ${bottom + 8})`} className="text-[8px]">{name}</text>
          </g>
        )
      })}
      <text x="20" y="98" textAnchor="middle" transform="rotate(-90 20 98)" className="text-[7px] font-bold">Saldo atual (R$)</text>
      <text x="171" y="175" textAnchor="middle" className="text-[8px] font-bold">Credor</text>
      <rect x="319" y="91" width="5" height="5" fill="#0f766e" />
      <text x="327" y="96" className="text-[8px]">Saldo atual (R$)</text>
    </svg>
  )
}

const SLICES = [
  ['Cartão de crédito', 21000, '#4f81bd'], ['Empréstimo pessoal', 37000, '#c0504d'], ['Cheque especial', 5700, '#9bbb59'],
  ['Financiamento', 83000, '#8064a2'], ['Carnê', 3200, '#4bacc6'],
]

function PieChart() {
  const total = SLICES.reduce((sum, s) => sum + s[1], 0)
  const cx = 151, cy = 128, r = 84
  const point = (share) => `${cx + r * Math.sin(share * 2 * Math.PI)} ${cy - r * Math.cos(share * 2 * Math.PI)}`
  let start = 0
  return (
    <svg viewBox="1 1 386 225" role="img" aria-label="Distribuição por Tipo de Dívida" className="h-[225px] w-[386px]">
      <text x="194" y="26" textAnchor="middle" className="text-[15px] font-bold">Distribuição por Tipo de Dívida</text>
      {SLICES.map(([name, value, color]) => {
        const end = start + value / total
        const d = `M${cx} ${cy}L${point(start)}A${r} ${r} 0 ${end - start > 0.5 ? 1 : 0} 1 ${point(end)}Z`
        start = end
        return <path key={name} d={d} fill={color} />
      })}
      {SLICES.slice(0, 3).map(([name, , color], i) => (
        <g key={name}>
          <rect x="304" y={91 + i * 12} width="5" height="5" fill={color} />
          <text x="312" y={96 + i * 12} className="text-[8px]">{name}</text>
        </g>
      ))}
    </svg>
  )
}

/* ---------- frame ---------- */

const SheetTabs = () => (
  <div className="flex h-4 items-stretch text-[8px] leading-4 text-[#3d3d3d]">
    <div className="flex w-[70px] items-center justify-center gap-px">
      {[['First sheet', 'M2.500 2v12M13 2L6 8l7 6zM5 8h1'], ['Previous sheet', 'M8 4L2 8l6 4zM15 4L9 8l6 4z'], ['Next sheet', 'M1 4l6 4-6 4zM8 4l6 4-6 4z'], ['Last sheet', 'M13.500 2v12M3 2l7 6-7 6z']].map(([label, d]) => (
        <button key={label} type="button" aria-label={label} disabled><Svg size="size-3.5"><path stroke="#c4c1be" d={d} /></Svg></button>
      ))}
    </div>
    <button type="button" aria-label="Add sheet" className="flex w-[22px] items-center justify-center">
      <Svg size="size-3"><path fill="#fff" stroke="#c8c8c8" d="M1 .5h11v15H1z" /><circle cx="12" cy="8" r="2.500" stroke="#2a6fc4" strokeWidth="2" fill="#fff" /></Svg>
    </button>
    <div role="tablist" className="flex">
      <button type="button" role="tab" aria-selected="false" className="w-[46px] border-r border-[#c8c8c8]">Dívidas</button>
      <button type="button" role="tab" aria-selected="true" className="w-[49px] border-b-2 border-[#7d7d7d] bg-white leading-[14px] font-bold text-[#1c1c1c]">Resumo</button>
      <button type="button" role="tab" aria-selected="false" className="w-[58px] border-r border-[#c8c8c8]">Instruções</button>
    </div>
  </div>
)

const Sidebar = () => (
  <aside className="relative flex w-[39px] shrink-0 flex-col items-center gap-[13px] border-l border-[#d0cecb] pt-1.5">
    <button type="button" aria-label="Sidebar settings"><Svg><path stroke="#1c1c1c" strokeWidth="1.300" d="M3 4h10M3 8h10M3 12h10" /></Svg></button>
    <button type="button" aria-label="Properties"><Svg><path fill="#fff" d="M1.500 1.500h13v13h-13z" /><path strokeWidth="2" d="M1 2.500h14" /><path stroke={BLUE} d="M4 7.500h8l-2-2M12 10.500H4l2 2" /></Svg></button>
    <button type="button" aria-label="Styles"><Svg><path strokeWidth="1.600" d="M1.500 12.500L5.500 1.500h1l4 10M3 8.500h6" /><path fill="#fff" d="M15 4.500l-5 6 1.500 1 4-6z" /><path fill={BLUE} stroke="none" d="M10 11c-3 0-2 4-6 4 4 2 8 0 7.500-3z" /></Svg></button>
    <button type="button" aria-label="Gallery"><Svg><path stroke={ORANGE} fill="#f8cf8d" d="M1.500 14.500v-12h5l1 2h7v10z" /><path fill="#fff" d="M6.500 7.500h8v7h-8z" /><path fill={BLUE} stroke="none" d="M7 13l3-2.500 2 1 2-2V14H7z" /></Svg></button>
    <button type="button" aria-label="Navigator"><Svg><circle cx="8" cy="8" r="6.500" fill="#fff" /><path fill={BLUE} stroke="none" d="M11.500 4l-1.500 6-5.500 2.500L6 6.500z" /><circle cx="8" cy="8" r="1.200" fill="#fff" stroke="none" /></Svg></button>
    <button type="button" aria-label="Functions"><FxIcon /></button>
    <span className="absolute top-[268px] left-0 h-[49px] w-[3px] bg-[#a09e9c]" />
  </aside>
)

const StatusBar = () => (
  <footer className="grid h-[17px] grid-cols-[27fr_154fr_226fr_190fr_171fr_46fr_31fr_20fr_20fr_187fr_128fr] items-center border-t border-[#d0cecb] text-[8px] leading-4 whitespace-nowrap text-[#3d3d3d]">
    <span className="flex justify-center"><Svg size="size-3"><path stroke="#8a8886" d="M1.500 1.500h13v13h-13zM4.500 1.500v5h7v-5M3.500 14.500v-5h9v5" /></Svg></span>
    <span className="border-r border-[#e2e0de]">Sheet 2 of 3</span>
    <span className="border-r border-[#e2e0de] pl-[7px]">Selected: 1 row, 6 columns</span>
    <span className="border-r border-[#e2e0de] pl-1.5">PageStyle_Resumo</span>
    <span className="border-r border-[#e2e0de] text-center">English (USA)</span>
    <span className="h-4 border-r border-[#e2e0de]" />
    <span className="flex h-4 items-center gap-0.5 border-r border-[#e2e0de] pl-[7px]">
      <Svg size="size-3"><path fill="#fff" stroke={BLUE} strokeWidth="1.500" d="M0 3.500h15v9H0z" /></Svg>
      <Svg size="h-3 w-1.5" box="0 0 6 12"><path d="M1 .5h4M3 .5v11M1 11.500h4" /></Svg>
    </span>
    <span className="h-4 border-r border-[#e2e0de]" />
    <span className="h-4 border-r border-[#e2e0de]" />
    <span className="border-r border-[#e2e0de] text-center">Average: ; Sum: 0</span>
    <span className="flex items-center justify-end gap-1 pr-[7px]">
      <button type="button" aria-label="Zoom out"><Svg size="size-2"><path strokeWidth="3" stroke="#1c1c1c" d="M1 8h14" /></Svg></button>
      <input
        type="range"
        aria-label="Zoom"
        min="0"
        max="200"
        defaultValue="100"
        className="h-px w-16 appearance-none bg-[#8a8886] [&::-webkit-slider-thumb]:h-2.5 [&::-webkit-slider-thumb]:w-[3px] [&::-webkit-slider-thumb]:appearance-none [&::-webkit-slider-thumb]:border [&::-webkit-slider-thumb]:border-[#4a4a4a] [&::-webkit-slider-thumb]:bg-white"
      />
      <button type="button" aria-label="Zoom in"><Svg size="size-2"><path strokeWidth="3" stroke="#1c1c1c" d="M1 8h14M8 1v14" /></Svg></button>
      <span className="pl-1">100%</span>
    </span>
  </footer>
)

export default function App() {
  return (
    <div className="flex h-screen flex-col overflow-hidden bg-[#f6f5f4] font-['Noto_Sans',sans-serif]">
      <header className="flex h-[17px] items-center border-b border-[#e6e4e2] pr-[7px] pl-[5px] text-[9px] leading-4 text-[#2e3436]">
        <nav aria-label="Menu" className="flex flex-1 gap-[11px]">
          {['File', 'Edit', 'View', 'Insert', 'Format', 'Styles', 'Sheet', 'Data', 'Tools', 'Window', 'Help'].map((item) => (
            <button key={item} type="button">{item}</button>
          ))}
        </nav>
        <button type="button" aria-label="Close document"><Svg size="size-2"><path strokeWidth="3" stroke="#1c1c1c" d="M3 3l10 10M13 3L3 13" /></Svg></button>
      </header>
      <StandardBar />
      <FormattingBar />
      <div className="flex min-h-0 flex-1">
        <main className="flex min-w-0 flex-1 flex-col">
          <FormulaBar />
          <div className="flex min-h-0 flex-1">
            <div className="relative min-w-0 flex-1 overflow-hidden bg-white">
              <SheetGrid />
              <div className="absolute top-48 left-[615px] border border-[#dedede] bg-white font-[Carlito,Lato,sans-serif]"><BarChart /></div>
              <div className="absolute top-[412px] left-[615px] border border-[#dedede] bg-white font-[Carlito,Lato,sans-serif]"><PieChart /></div>
            </div>
            <div className="w-2.5 shrink-0 bg-[#cfcfcf] px-0.5 pt-1">
              <div className="ml-px h-[253px] w-[5px] rounded-full bg-[#7f7f7f]" />
            </div>
          </div>
          <div className="flex h-2.5 shrink-0 items-center bg-[#cfcfcf] pl-0.5">
            <div className="h-[5px] w-[47%] rounded-full bg-[#7f7f7f]" />
          </div>
          <SheetTabs />
        </main>
        <Sidebar />
      </div>
      <StatusBar />
    </div>
  )
}
